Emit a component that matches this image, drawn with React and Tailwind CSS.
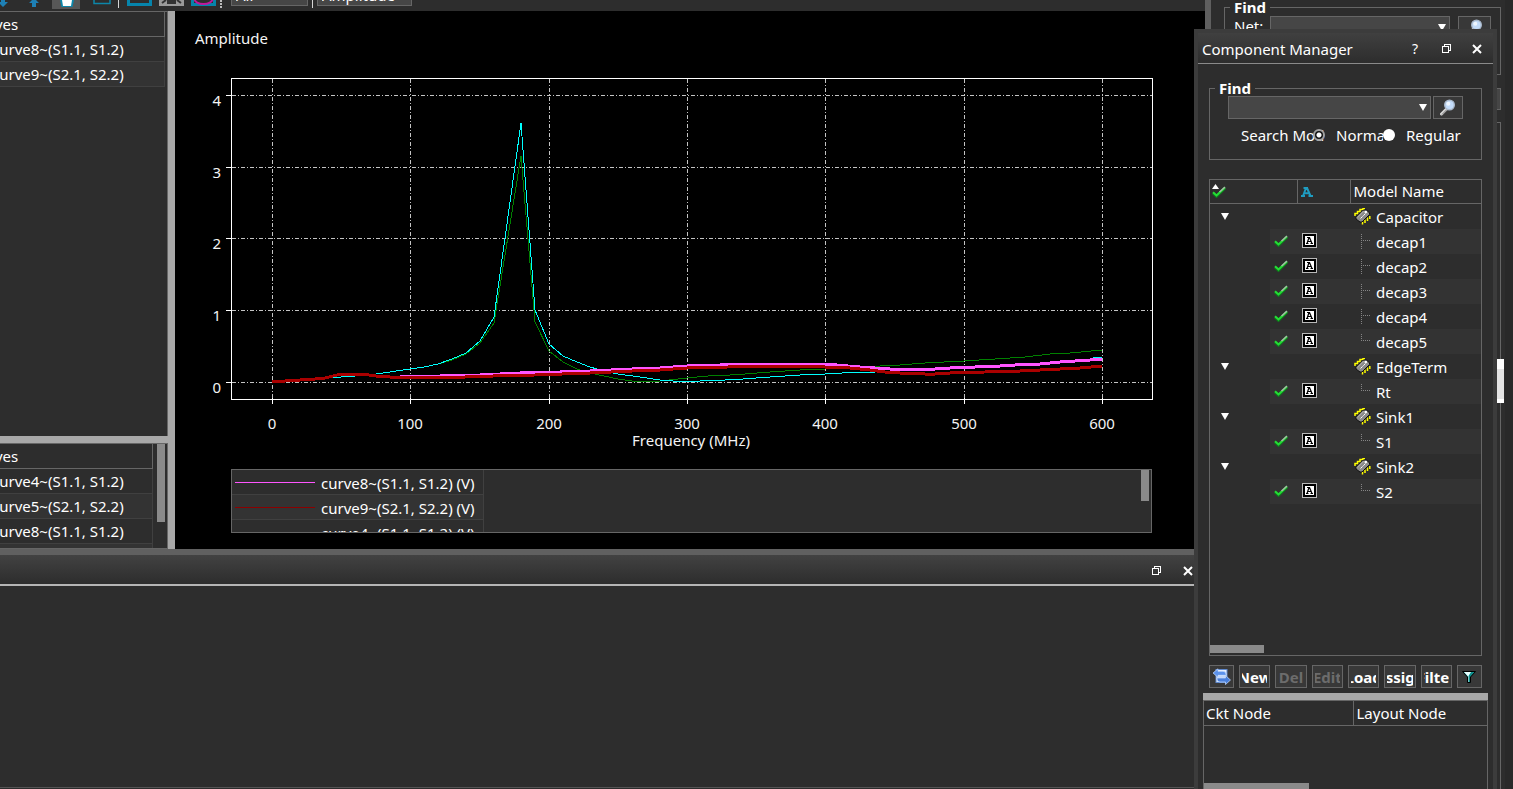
import React from "react";

const field = "border border-[#666] bg-[#464646]";

function CheckIcon() {
  return (
    <svg width="14" height="12" viewBox="0 0 14 12" aria-hidden="true">
      <path d="M1 7 L4.5 10.3 L13 2" fill="none" stroke="#0d7a1c" strokeWidth="3" />
      <path d="M1 6.3 L4.5 9.5 L13 1.5" fill="none" stroke="#25dd35" strokeWidth="2" />
      <path d="M7.5 6 L13 1" stroke="#a5b8a6" strokeWidth="1.5" />
    </svg>
  );
}

function ABoxIcon() {
  return (
    <svg width="15" height="15" viewBox="0 0 15 15" aria-hidden="true">
      <g shapeRendering="crispEdges">
        <rect width="15" height="15" fill="#b9b9b9" />
        <rect x="1" y="1" width="13" height="13" fill="#000" />
        <rect x="3" y="3" width="9" height="9" fill="#fff" />
      </g>
      <path d="M5 4.500H8M7 4.500L5 10.500M7.500 4.500L10 10.500M4 10.500H6.500M8.500 10.500H11M5.500 8.500H9" fill="none" stroke="#000" strokeWidth="1.200" />
    </svg>
  );
}

function ChipIcon() {
  return (
    <svg width="17" height="17" viewBox="0 0 17 17" aria-hidden="true">
      <path d="M1 8V5.500h2.500V3.500H6V1.500h3V.8h2M8.500 16.500v-3M11 15v-3.500M13.500 13V9.500M15.800 11V8" fill="none" stroke="#ff0" strokeWidth="1.500" />
      <path d="M2 9.500L9.500 2L12.500 2L15.500 5V6.500L8 14H6L2 11Z" fill="#8b8b8b" stroke="#111" strokeWidth="1" />
      <path d="M3 9.500L9.500 3" stroke="#c4c4c4" strokeWidth="1" />
      <path d="M6.500 10.500L11.500 5.500" stroke="#fff" strokeWidth="1" strokeDasharray="3 1" />
      <circle cx="11.800" cy="4" r="1.300" fill="#fff" />
    </svg>
  );
}

function SearchIcon() {
  return (
    <svg width="16" height="17" viewBox="0 0 16 17" aria-hidden="true">
      <path d="M1.5 15L7 9.5" stroke="#d6d6d6" strokeWidth="3" strokeLinecap="round" />
      <path d="M2 15.5L7 10.5" stroke="#777" strokeWidth="1" />
      <circle cx="9.5" cy="6" r="4.8" fill="#c3dcfa" stroke="#a9b8cb" strokeWidth="1.4" />
      <circle cx="8.3" cy="4.8" r="2" fill="#eef6ff" />
    </svg>
  );
}

function RestoreIcon() {
  return (
    <svg width="10" height="10" viewBox="0 0 10 10" shapeRendering="crispEdges" aria-hidden="true">
      <path d="M2.5 3V.5h6v6H7M.5 2.5h6v6h-6z" fill="none" stroke="#fff" />
    </svg>
  );
}

function CloseIcon() {
  return (
    <svg width="10" height="10" viewBox="0 0 10 10" aria-hidden="true">
      <path d="M1 1l8 8M9 1L1 9" stroke="#fff" strokeWidth="2" />
    </svg>
  );
}

function Arrow() {
  return (
    <svg width="8" height="7" viewBox="0 0 8 7" aria-hidden="true">
      <path d="M0 0h8L4 7z" fill="#fff" />
    </svg>
  );
}

function TreeLine({ last }) {
  return (
    <svg width="10" height="25" viewBox="0 0 10 25" shapeRendering="crispEdges" aria-hidden="true">
      <path d={last ? "M.5 5V12" : "M.5 5V20"} stroke="#858585" strokeDasharray="1 1" />
      <path d="M2 11.5H10" stroke="#858585" strokeDasharray="1 1" />
    </svg>
  );
}

function Select({ label, className, options = [""], arrow = true, inner = "" }) {
  return (
    <div className={`relative flex items-center ${className}`}>
      <select aria-label={label} className={`h-full w-full appearance-none pl-1 text-[15px] leading-5 text-white ${field} ${inner}`}>
        {options.map((o) => (
          <option key={o}>{o}</option>
        ))}
      </select>
      {arrow && (
        <span className="pointer-events-none absolute right-1">
          <Arrow />
        </span>
      )}
    </div>
  );
}

function Toolbar() {
  return (
    <div className="flex h-[11px] shrink-0 items-end overflow-hidden bg-[#2d2d2d]">
      <svg width="228" height="11" viewBox="0 0 228 11" className="shrink-0" aria-hidden="true">
        <path d="M1 0h4v2h3L3 7L-2 2h3z" fill="#1e80b5" />
        <path d="M34 -2l5 5h-3v4h-4V3h-3z" fill="#1e80b5" />
        <rect x="52" y="0" width="28" height="9" fill="#575757" />
        <path d="M60 0h14l-1.500 7h-11z" fill="#0d86a9" />
        <path d="M62 0h10l-1 6h-8z" fill="#fff" />
        <path d="M94 0v3.500h16V0" fill="none" stroke="#0d86a9" strokeWidth="1.500" />
        <rect x="118" y="0" width="1" height="8" fill="#d5d5d5" />
        <path d="M127 0h25v6h-25z" fill="#0684ab" />
        <path d="M130 0h19v3h-19z" fill="#2d2d2d" />
        <path d="M159 0h25v6h-25z" fill="#9a9a9a" />
        <path d="M162 3l4-3M181 3l-4-3M168 3h7V1h-7z" stroke="#333" strokeWidth="2" fill="#333" />
        <path d="M191 0h25v6h-25z" fill="#0684ab" />
        <path d="M194 0h19v3h-19z" fill="#2d2d2d" />
        <ellipse cx="203.500" cy="-1" rx="9" ry="5" fill="none" stroke="#c0189b" strokeWidth="2" />
        <path d="M221 0v9" stroke="#bbb" strokeWidth="2" strokeDasharray="2 1" />
      </svg>
      <Select label="Filter" options={["All"]} arrow={false} className="mb-[5px] ml-[3px] h-[22px] w-[77px] shrink-0" />
      <div className="mx-1 mb-[3px] h-3 w-px shrink-0 bg-[#d5d5d5]" />
      <Select label="Quantity" options={["Amplitude"]} arrow={false} className="mb-[5px] h-[22px] w-[95px] shrink-0" />
    </div>
  );
}

function CurveRow({ children, shaded }) {
  return (
    <li className={`h-[25px] overflow-hidden border-b border-[#404040] leading-6 ${shaded ? "bg-[#333]" : ""}`}>
      <span className="-ml-2 whitespace-nowrap">{children}</span>
    </li>
  );
}

function CurveList({ rows, className }) {
  return (
    <div className={className}>
      <div className="h-[25px] overflow-hidden border-r border-b border-[#666] leading-6">
        <span className="-ml-[30px]">Curves</span>
      </div>
      <ul className="border-r border-[#404040]">
        {rows.map((r, i) => (
          <CurveRow key={r} shaded={i % 2 === 1}>{r}</CurveRow>
        ))}
      </ul>
    </div>
  );
}

const cyan = "272,382 313,379 341,377 369,375 383,373 410,369 424,367 438,364 452,359 466,353 480,341 494,317 521,123 535,310 549,344 563,356 577,362 590,367 604,371 618,374 640,377 660,380 673,381 700,381 725,380 743,379 770,377 800,375 825,374 860,372 875,372 885,370 925,369 950,368 975,367 1000,366 1040,364 1075,361 1090,359 1096,357 1102,357";
const green = "272,382 313,379 341,377 369,375 383,373 410,369 424,367 438,364 452,360 466,354 480,343 494,323 521,156 535,322 549,351 563,362 577,369 590,373 604,376 618,379 632,381 645,382 660,381 687,378 708,376 730,375 745,374 770,372 800,370 825,369 850,367 880,366 900,365 925,363 964,361 995,359 1025,357 1050,354 1070,353 1102,350";
const pink = "272,382 285,381 300,380 315,379 325,378 333,376 341,374 357,374 369,375 376,376 390,377 400,377 440,376 480,375 520,373 560,372 590,371 632,369 660,368 687,366 720,365 745,364 825,364 848,366 860,367 875,368 890,369 935,369 950,368 975,367 1000,366 1015,365 1040,364 1060,362 1075,361 1090,360 1102,359";
const red = "272,382 285,381 300,380 315,379 325,378 333,376 341,374 357,374 369,375 376,376 390,377 405,378 424,377 465,377 493,376 535,375 590,373 632,371 660,370 687,368 728,367 755,366 810,366 825,367 850,368 870,370 885,372 900,373 925,374 935,374 950,373 985,372 1020,371 1040,370 1060,369 1080,368 1102,366";
const xs = [272, 410, 549, 687, 825, 964, 1102];
const ys = [382, 310, 238, 167, 95];

function Chart() {
  return (
    <svg viewBox="175 11 1030 450" className="w-full" role="img" aria-label="Amplitude against frequency" fill="#f4f4f4" fontSize="15">
      <text x="195" y="44">Amplitude</text>
      <g shapeRendering="crispEdges" fill="none">
        <g stroke="#c4c4c4" strokeDasharray="4 2 1 2">
          {xs.map((x) => <path key={x} d={`M${x + 0.5} 79V399`} />)}
          {ys.map((y) => <path key={y} d={`M232 ${y + 0.5}H1152`} />)}
        </g>
        <g stroke="#fff">
          <rect x="231.5" y="78.5" width="921" height="321" />
          {xs.map((x) => <path key={x} d={`M${x + 0.5} 398V404`} />)}
          {ys.map((y) => <path key={y} d={`M226 ${y + 0.5}H232`} />)}
        </g>
        <polyline points={green} stroke="#008000" />
        <polyline points={cyan} stroke="#00ffff" />
        <polyline points={pink} stroke="#ff55ff" strokeWidth="3" />
        <polyline points={red} stroke="#aa0000" strokeWidth="3" />
      </g>
      {xs.map((x, i) => <text key={x} x={x} y="429" textAnchor="middle">{i * 100}</text>)}
      {ys.map((y, i) => <text key={y} x="221" y={y + 11} textAnchor="end">{i}</text>)}
      <text x="691" y="446" textAnchor="middle">Frequency (MHz)</text>
    </svg>
  );
}

const legend = [
  ["curve8~(S1.1, S1.2) (V)", "bg-[#ff55ff]"],
  ["curve9~(S2.1, S2.2) (V)", "bg-[#8b0000]"],
  ["curve4~(S1.1, S1.2) (V)", "bg-transparent"],
];

function Legend() {
  return (
    <div className="mr-[53px] ml-14 flex h-16 justify-between overflow-hidden border border-[#666] bg-[#2d2d2d]">
      <ul className="w-[252px] border-r border-[#404040]">
        {legend.map(([name, color], i) => (
          <li key={name} className={`flex h-[25px] items-center border-b border-[#404040] ${i % 2 ? "bg-[#333]" : ""}`}>
            <span className={`ml-[3px] h-px w-20 shrink-0 ${color}`} />
            <span className="ml-1.5 pt-0.5 leading-6 whitespace-nowrap">{name}</span>
          </li>
        ))}
      </ul>
      <div className="mr-0.5 h-[31px] w-2 bg-[#8a8a8a]" />
    </div>
  );
}

const groups = [
  ["Capacitor", ["decap1", "decap2", "decap3", "decap4", "decap5"]],
  ["EdgeTerm", ["Rt"]],
  ["Sink1", ["S1"]],
  ["Sink2", ["S2"]],
];

function ModelTable() {
  return (
    <div className="flex flex-1 flex-col justify-between overflow-hidden border border-[#666]">
      <table className="w-full table-fixed border-collapse text-left">
        <colgroup>
          <col className="w-[87px]" />
          <col className="w-[53px]" />
          <col />
        </colgroup>
        <thead>
          <tr className="h-[23px] border-b border-[#666]">
            <th className="border-r border-[#666] p-0" aria-label="Enabled">
              <div className="relative h-5 pt-1 pl-0.5">
                <svg width="7" height="5" viewBox="0 0 7 5" className="absolute top-0.5 left-0.5" aria-hidden="true"><path d="M3.500 0L7 5H0z" fill="#fff" /></svg>
                <CheckIcon />
              </div>
            </th>
            <th className="border-r border-[#666] p-0 pl-[3px]" aria-label="Analysis">
              <svg width="12" height="10" viewBox="0 0 12 10" aria-hidden="true">
                <path d="M2.500 1h4.500M5 1L2 9M6 1l3.500 8M0 9h4M7.500 9H12M3.500 6.200h5" stroke="#1f9cc0" strokeWidth="2" fill="none" />
              </svg>
            </th>
            <th className="p-0 pl-[3px] leading-[23px] font-normal">Model Name</th>
          </tr>
        </thead>
        <tbody>
          {groups.map(([name, parts]) => (
            <React.Fragment key={name}>
              <tr>
                <td className="p-0 pl-[11px]">
                  <button className="flex" aria-label={`Collapse ${name}`}><Arrow /></button>
                </td>
                <td />
                <td className="p-0">
                  <div className="flex h-[25px] items-center gap-[5px] pl-1">
                    <span><ChipIcon /></span>
                    <span className="leading-6">{name}</span>
                  </div>
                </td>
              </tr>
              {parts.map((part, i) => {
                const shade = i % 2 === 0 ? "bg-[#333]" : "";
                return (
                  <tr key={part}>
                    <td className="p-0">
                      <div className={`ml-[60px] flex h-[25px] items-center pb-0.5 pl-1 ${shade}`}><CheckIcon /></div>
                    </td>
                    <td className={`p-0 ${shade}`}>
                      <div className="flex h-[25px] items-center pb-0.5 pl-[5px]"><ABoxIcon /></div>
                    </td>
                    <td className={`p-0 ${shade}`}>
                      <div className="flex h-[25px] items-center gap-[5px] pl-[11px]">
                        <TreeLine last={i === parts.length - 1} />
                        <span className="leading-6">{part}</span>
                      </div>
                    </td>
                  </tr>
                );
              })}
            </React.Fragment>
          ))}
        </tbody>
      </table>
      <div className="mb-0.5 h-2 w-[54px] bg-[#8a8a8a]" />
    </div>
  );
}

const actions = [
  ["New", false],
  ["Del", true],
  ["Edit", true],
  ["Load", false],
  ["Assign", false],
  ["Filter", false],
];

function ActionBar() {
  const box = "flex h-[23px] items-center justify-center overflow-hidden border border-[#666] bg-[#383838] px-0.5";
  return (
    <div className="mx-[11px] mt-[9px] flex gap-[5px]">
      <button className={`${box} w-[25px] shrink-0`} aria-label="Refresh">
        <svg width="18" height="17" viewBox="0 0 18 17" className="shrink-0" aria-hidden="true">
          <rect x="3" y="1.500" width="11" height="13" fill="#e8f0fc" stroke="#5f88cc" />
          <path d="M4 6h9M4 9h9M4 12h7" stroke="#9dbcf0" />
          <path d="M0 5L5 .8v2.500h5q3 0 3 3v1H5v2z" fill="#5b92ec" stroke="#c5dcff" strokeWidth=".7" />
          <path d="M17.500 12L12.500 16.500v-2.500H7q-3 0-3-3v-1h8.500V7.500z" fill="#4a80dc" stroke="#c5dcff" strokeWidth=".7" />
        </svg>
      </button>
      {actions.map(([name, off]) => (
        <button key={name} disabled={off} className={`${box} min-w-0 flex-1 font-bold ${off ? "text-[#6c6c6c]" : "text-white"}`}>
          <span className="flex w-full justify-center overflow-hidden leading-6">{name}</span>
        </button>
      ))}
      <button className={`${box} w-[25px] shrink-0`} aria-label="Filter options">
        <svg width="14" height="12" viewBox="0 0 14 12" aria-hidden="true">
          <path d="M.5 .5h13L8.500 6v5.500h-3V6z" fill="#0e8f8c" stroke="#000" />
          <path d="M2 1h7L6.500 5v6H6V5.500z" fill="#e9ffff" />
        </svg>
      </button>
    </div>
  );
}

const radio = "relative -ml-3 h-3 w-3 shrink-0 appearance-none rounded-full bg-white checked:border-2 checked:border-[#a0a0a0] checked:bg-[radial-gradient(circle,#fff_0_2px,#111_3px)]";

function ComponentManager() {
  return (
    <section className="absolute top-[29px] right-4 bottom-0 flex w-[303px] flex-col overflow-hidden border-4 border-b-0 border-[#3c3c3c] bg-[#2d2d2d]">
      <header className="flex h-[31px] shrink-0 items-center justify-between border-b border-[#8a8a8a] bg-linear-to-b from-[#404040] to-[#2d2d2d] pt-0.5 pr-[11px] pl-1">
        <h2>Component Manager</h2>
        <div className="flex items-center gap-5">
          <button aria-label="Help" className="mr-1 text-sm leading-5">?</button>
          <button aria-label="Restore"><RestoreIcon /></button>
          <button aria-label="Close"><CloseIcon /></button>
        </div>
      </header>
      <fieldset className="mx-[11px] mt-[14px] flex h-[82px] shrink-0 flex-col border border-[#666]">
        <legend className="ml-[5px] px-1 leading-[20px] font-bold">Find</legend>
        <div className="-mt-0.5 ml-[18px] flex gap-0.5">
          <Select label="Find component" className="h-[23px] w-[203px]" />
          <button aria-label="Search" className="flex h-[23px] w-[30px] items-center justify-center border border-[#666] bg-[#383838]"><SearchIcon /></button>
        </div>
        <div className="mt-1.5 ml-[31px] flex items-center leading-[20px]">
          <span className="w-[84px] overflow-hidden whitespace-nowrap">Search Mode</span>
          <input type="radio" name="mode" id="normal" defaultChecked className={radio} />
          <label htmlFor="normal" className="ml-[11px] w-[59px] overflow-hidden pr-3"><span className="block overflow-hidden">Normal</span></label>
          <input type="radio" name="mode" id="regular" className={radio} />
          <label htmlFor="regular" className="ml-[11px]">Regular</label>
        </div>
      </fieldset>
      <div className="mx-[11px] mt-[19px] flex min-h-0 flex-1">
        <ModelTable />
      </div>
      <ActionBar />
      <div className="mx-[5px] mt-[5px] h-[7px] shrink-0 bg-[#a8a8a8]" />
      <div className="mx-[5px] flex h-[89px] shrink-0 flex-col justify-between border border-b-0 border-[#666]">
        <table className="w-full table-fixed border-collapse text-left">
          <thead>
            <tr className="h-6 border-b border-[#666]">
              <th className="w-[149px] border-r border-[#666] p-0 pl-0.5 leading-6 font-normal">Ckt Node</th>
              <th className="p-0 pl-[3px] leading-6 font-normal">Layout Node</th>
            </tr>
          </thead>
        </table>
        <div className="h-1.5 w-[105px] bg-[#8a8a8a]" />
      </div>
    </section>
  );
}

function NetDock() {
  return (
    <aside className="relative flex w-[308px] shrink-0 flex-col overflow-hidden border-l-[6px] border-[#5f5f5f] bg-[#2d2d2d] pr-3 pl-[13px]">
      <fieldset className="-mt-0.5 h-[77px] shrink-0 border border-[#666]">
        <legend className="ml-[5px] px-1 leading-[18px] font-bold">Find</legend>
        <div className="ml-[9px] flex">
          <span className="w-9 leading-[20px]">Net:</span>
          <Select label="Net" className="h-[22px] w-[180px]" />
          <button aria-label="Search nets" className="ml-2 flex h-[22px] w-[33px] items-center justify-center border border-[#666] bg-[#383838]"><SearchIcon /></button>
        </div>
      </fieldset>
      <div className="mt-[13px] h-[22px] shrink-0 border border-[#666] bg-[#464646]" />
      <div className="mt-3 flex-1 border border-b-0 border-[#666]" />
      <div className="absolute top-[359px] right-[9px] h-11 w-2 border-t-[10px] border-b-4 border-white bg-[#e4e4e4]" />
      <div className="absolute inset-y-0 right-0 w-2 bg-[#292929]" />
    </aside>
  );
}

export default function App() {
  return (
    <div className="relative flex h-screen overflow-hidden bg-[#2d2d2d] font-['Noto_Sans',sans-serif] text-[15px] text-white">
      <main className="flex min-w-0 flex-1 flex-col">
        <Toolbar />
        <div className="flex min-h-0 flex-1">
          <div className="flex w-[175px] shrink-0 flex-col border-r-[7px] border-[#a8a8a8]">
            <CurveList className="min-h-0 flex-1 border-t border-r border-[#666] pr-0.5" rows={["curve8~(S1.1, S1.2)", "curve9~(S2.1, S2.2)"]} />
            <div className="h-[7px] shrink-0 bg-[#a8a8a8]" />
            <div className="flex h-[106px] shrink-0 justify-between overflow-hidden border border-l-0 border-[#666] pr-0.5">
              <CurveList className="w-[153px]" rows={["curve4~(S1.1, S1.2)", "curve5~(S2.1, S2.2)", "curve8~(S1.1, S1.2)", "curve9~(S2.1, S2.2)"]} />
              <div className="h-[78px] w-2 bg-[#8a8a8a]" />
            </div>
          </div>
          <div className="min-w-0 flex-1 overflow-hidden bg-black">
            <Chart />
            <div className="mt-2">
              <Legend />
            </div>
          </div>
        </div>
        <section className="flex h-60 shrink-0 flex-col border-t-[6px] border-[#606060]">
          <header className="flex h-[31px] shrink-0 items-center justify-end gap-[21px] border-b-2 border-[#b5b5b5] bg-linear-to-b from-[#424242] to-[#2d2d2d] pt-0.5 pr-3">
            <button aria-label="Restore panel"><RestoreIcon /></button>
            <button aria-label="Close panel"><CloseIcon /></button>
          </header>
          <div className="mb-px flex-1 border-b border-[#555]" />
        </section>
      </main>
      <NetDock />
      <ComponentManager />
    </div>
  );
}
